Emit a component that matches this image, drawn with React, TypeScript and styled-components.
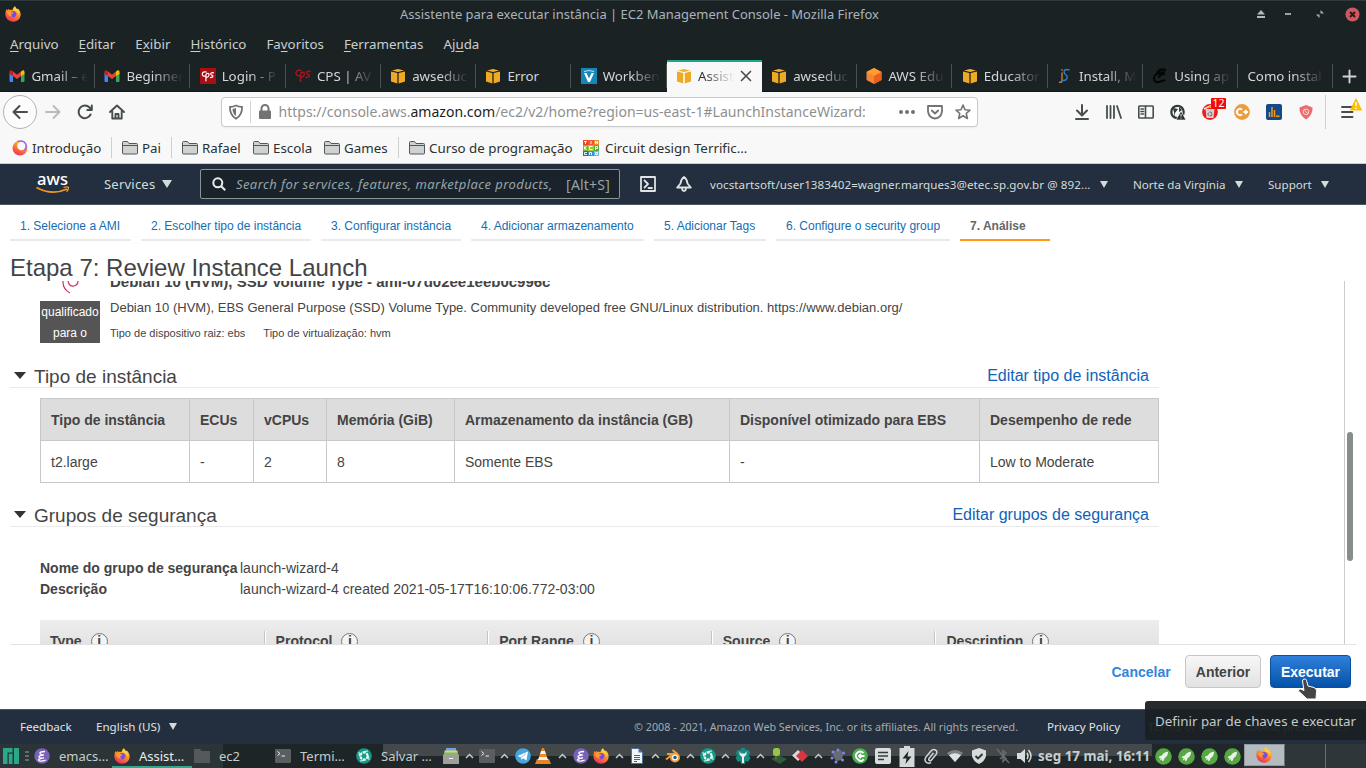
import React from "react";
import styled, { createGlobalStyle, css } from "styled-components";

const ui = '"Noto Sans", sans-serif';
const sans = '"Liberation Sans", Arial, sans-serif';

const Global = createGlobalStyle`
  * { box-sizing: border-box; }
  html, body { margin: 0; padding: 0; }
  body { width: 1366px; height: 768px; overflow: hidden; background: #fff; }
  svg { display: block; flex: none; }
`;

const Screen = styled.div`
  position: relative;
  width: 1366px;
  height: 768px;
  display: flex;
  flex-direction: column;
  overflow: hidden;
  font-family: ${ui};
  white-space: nowrap;
`;

/* ---------- window chrome ---------- */
const TitleBar = styled.header`
  height: 28px;
  flex: none;
  display: flex;
  align-items: center;
  background: #1b2224;
  border-top: 1px solid #2f3a3c;
  padding: 0 0 1px 5px;
`;
const WindowTitle = styled.div`
  font-size: 12.96px;
  line-height: 20px;
  color: #a9b4bd;
  margin-left: 379px;
  padding-bottom: 1px;
`;
const WindowButtons = styled.div`
  display: flex;
  align-items: center;
  margin-left: auto;
`;
const MenuBar = styled.nav`
  height: 32px;
  flex: none;
  display: flex;
  align-items: center;
  gap: 20px;
  padding-left: 10px;
  background: #1b2224;
  color: #c9cfcf;
  font-size: 13.33px;
  u { text-underline-offset: 2px; }
`;
const TabStrip = styled.div`
  height: 32px;
  flex: none;
  display: flex;
  align-items: center;
  background: #1b2224;
  box-shadow: inset 0 -1px 0 #101516;
`;
const Tab = styled.div<{ $active?: boolean; $first?: boolean }>`
  position: relative;
  width: ${(p) => (p.$first ? 95 : 95.25)}px;
  height: 32px;
  flex: none;
  display: flex;
  align-items: center;
  gap: 6px;
  padding-left: 9.4px;
  color: #d3d7d7;
  font-size: 13.33px;
  ${(p) =>
    p.$active
      ? css`
          background: #f8f8f8;
          color: #2f3536;
          box-shadow: inset 0 2px 0 #1fa68a;
        `
      : css`
          &::after {
            content: "";
            position: absolute;
            right: 0;
            top: 4px;
            width: 1px;
            height: 24px;
            background: #4a5152;
          }
        `}
`;
const TabLabel = styled.span<{ $w?: number; $fade?: boolean }>`
  width: ${(p) => p.$w ?? 55}px;
  flex: none;
  overflow: hidden;
  mask-image: ${(p) => (p.$fade === false ? "none" : "linear-gradient(90deg, #000 calc(100% - 30px), transparent)")};
`;
const NewTab = styled.div`
  margin-left: 8.5px;
`;
const NavBar = styled.div`
  position: relative;
  height: 40px;
  flex: none;
  display: flex;
  align-items: center;
  background: #f8f8f8;
`;
const BackButton = styled.div`
  width: 34px;
  height: 34px;
  margin-left: 3px;
  border: 1px solid #b4b4b4;
  border-radius: 50%;
  background: #fcfcfc;
  display: grid;
  place-items: center;
`;
const NavIcons = styled.div`
  display: flex;
  align-items: center;
  gap: 16px;
  margin-left: 8px;
  width: 176px;
`;
const UrlBox = styled.div`
  width: 757px;
  height: 30px;
  display: flex;
  align-items: center;
  background: #fff;
  border: 1px solid #c9c9c9;
  border-radius: 4px;
  padding: 0 6px 0 6px;
  box-shadow: 0 1px 2px rgba(0, 0, 0, 0.05);
`;
const UrlDivider = styled.i`
  width: 1px;
  height: 22px;
  background: #d4d4d4;
  margin: 0 7px 0 6px;
`;
const Url = styled.div`
  flex: 1;
  margin: -1px 0 0 6.5px;
  font-size: 14.03px;
  color: #8f8f8f;
  b { color: #1d1d1d; font-weight: 400; }
`;
const UrlActions = styled.div`
  display: flex;
  align-items: center;
  gap: 12px;
`;
const Extensions = styled.div`
  width: 347px;
  flex: none;
  display: flex;
  align-items: center;
  gap: 16px;
  padding-left: 96px;
`;
const Badge = styled.span`
  position: absolute;
  left: 1211px;
  top: 6px;
  width: 15px;
  height: 11px;
  border-radius: 1px;
  background: #f50a0a;
  color: #fff;
  font: 10.5px/11px ${ui};
  text-align: center;
`;
const WarnBadge = styled.div`
  position: absolute;
  left: 1350px;
  top: 6px;
`;
const MenuSlot = styled.div`
  border-left: 1px solid #cfcfcf;
  height: 34px;
  padding-left: 15px;
  display: flex;
  align-items: center;
`;
const Bookmarks = styled.div`
  height: 32px;
  flex: none;
  display: flex;
  align-items: center;
  background: #f8f8f8;
  border-bottom: 1px solid #c8ccd2;
  font-size: 13.33px;
  color: #2b3032;
  padding-left: 12px;
`;
const Bookmark = styled.div<{ $w: number; $gap?: number }>`
  width: ${(p) => p.$w}px;
  flex: none;
  display: flex;
  align-items: center;
  gap: ${(p) => p.$gap ?? 4}px;
`;
const BookmarkDivider = styled.i<{ $gap: number }>`
  width: 1px;
  height: 21px;
  background: #cfcfcf;
  margin-right: ${(p) => p.$gap}px;
`;

/* ---------- AWS console ---------- */
const AwsBar = styled.div`
  height: 41px;
  flex: none;
  display: flex;
  align-items: center;
  background: #232f3e;
  border-bottom: 1px solid #4b5561;
  color: #d5dbdb;
  font-size: 13px;
  padding-left: 36px;
`;
const Services = styled.div`
  width: 96px;
  margin-left: 34px;
  display: flex;
  align-items: center;
  gap: 7px;
  letter-spacing: 0.22px;
`;
const Search = styled.div`
  width: 420px;
  height: 30px;
  display: flex;
  align-items: center;
  background: #1a222c;
  border: 1px solid #879596;
  border-radius: 2px;
  padding: 0 9px 0 11px;
  color: #95a5a6;
`;
const SearchHint = styled.i`
  margin-left: 10px;
  letter-spacing: 0.4px;
`;
const Shortcut = styled.span`
  margin-left: auto;
  font-size: 14px;
  letter-spacing: 0.2px;
`;
const AwsTools = styled.div`
  display: flex;
  gap: 20px;
  margin-left: 20px;
`;
const AccountGroup = styled.div`
  display: flex;
  gap: 25px;
  margin-left: 18px;
`;
const Account = styled.div<{ $w: number; $track?: number }>`
  width: ${(p) => p.$w}px;
  flex: none;
  display: flex;
  align-items: center;
  justify-content: space-between;
  font-size: 11.6px;
  letter-spacing: ${(p) => p.$track ?? 0}px;
`;
const Caret = styled.i<{ $s?: number }>`
  width: 0;
  height: 0;
  border: ${(p) => p.$s ?? 5}px solid transparent;
  border-top: ${(p) => (p.$s ?? 5) * 1.6}px solid #d5dbdb;
  border-bottom: 0;
`;
const Page = styled.main`
  height: 504px;
  flex: none;
  background: #fff;
  font-family: ${sans};
  color: #444;
`;
const Steps = styled.div`
  height: 36px;
  display: flex;
  gap: 10px;
  padding-left: 10px;
`;
const Step = styled.div<{ $w: number; $active?: boolean }>`
  width: ${(p) => p.$w}px;
  height: 36px;
  padding: 12px 0 0 10px;
  font-size: 12px;
  line-height: 18px;
  color: ${(p) => (p.$active ? "#666" : "#146eb4")};
  font-weight: ${(p) => (p.$active ? 700 : 400)};
  border-bottom: 2px solid ${(p) => (p.$active ? "#ff9a12" : "#eaeaea")};
`;
const Heading = styled.h1`
  margin: 0;
  height: 40px;
  padding: 12px 0 0 10px;
  font-weight: 400;
  font-size: 24px;
  line-height: 30px;
`;
const ScrollArea = styled.section`
  height: 363px;
  width: 1346px;
  margin-left: 10px;
  display: flex;
  overflow: hidden;
`;
const Content = styled.div`
  width: 1149px;
  height: 363px;
`;
const Track = styled.div`
  margin-left: auto;
  width: 12px;
  height: 363px;
  border-left: 1px solid #ccc;
  padding: 151px 0 0 2px;
`;
const Thumb = styled.div`
  width: 6px;
  height: 129px;
  border-radius: 3px;
  background: #888c8d;
`;
const Ami = styled.div`
  display: flex;
  height: 80px;
  margin-left: 30px;
`;
const AmiBadgeColumn = styled.div`
  width: 60px;
`;
const FreeTier = styled.div`
  width: 60px;
  height: 42px;
  margin-top: 6px;
  padding-top: 1px;
  background: #555;
  color: #fff;
  font-size: 12px;
  line-height: 21px;
  text-align: center;
`;
const AmiText = styled.div`
  margin-left: 10px;
`;
const AmiTitle = styled.div`
  margin-top: -9px;
  height: 20px;
  font-size: 15px;
  font-weight: 700;
  line-height: 20px;
`;
const AmiDescription = styled.div`
  margin-top: 6px;
  font-size: 13px;
  line-height: 20px;
  letter-spacing: 0.005px;
`;
const AmiMeta = styled.div`
  display: flex;
  gap: 18px;
  margin-top: 6px;
  font-size: 11px;
  line-height: 18px;
`;
const SectionHead = styled.div`
  height: 27px;
  display: flex;
  align-items: center;
  border-bottom: 1px solid #eaeaea;
  font-size: 19px;
  padding: 6px 10px 0 3px;
`;
const Toggle = styled.i`
  border: 6.5px solid transparent;
  border-top: 7px solid #333;
  border-bottom: 0;
  margin: -3px 8.500px 0 0.5px;
`;
const EditLink = styled.a`
  margin: -2px 0 0 auto;
  font-size: 16px;
  color: #0f62b8;
`;
const Table = styled.table`
  width: 1118px;
  height: 85px;
  margin: 10px 0 17px 30px;
  border-collapse: collapse;
  table-layout: fixed;
  font-size: 14px;
  th, td {
    border: 1px solid #c8c8c8;
    padding: 0 0 0 10px;
    text-align: left;
    height: 42px;
  }
  th { background: #ddd; }
`;
const GroupInfo = styled.dl`
  margin: 31px 0 20px 30px;
  display: grid;
  grid-template-columns: 200px 1fr;
  font-size: 14px;
  line-height: 21px;
  dt { font-weight: 700; }
  dd { margin: 0; }
`;
const RuleHeader = styled.div`
  margin-left: 30px;
  height: 42px;
  display: flex;
  align-items: center;
  background: linear-gradient(#ededed, #dcdcdc);
  font-size: 14px;
  font-weight: 700;
`;
const RuleColumn = styled.div<{ $w: number }>`
  width: ${(p) => p.$w}px;
  height: 20px;
  display: flex;
  align-items: center;
  gap: 9px;
  padding-left: 10px;
  & + & { border-left: 1px solid #c4c4c4; box-shadow: inset 1px 0 0 #fff; padding-left: 11px; }
`;
const Info = styled.span`
  width: 17px;
  height: 17px;
  border: 1px solid #777;
  border-radius: 50%;
  background: #f4f4f4;
  font: 700 14px/15px ${sans};
  text-align: center;
`;
const Actions = styled.div`
  width: 1346px;
  height: 65px;
  margin-left: 10px;
  border-top: 1px solid #e2e2e2;
  display: flex;
  justify-content: flex-end;
  padding: 10px 5px 0 0;
  font-size: 14px;
  font-weight: 700;
`;
const Button = styled.button<{ $kind: "link" | "plain" | "primary"; $w: number }>`
  width: ${(p) => p.$w}px;
  height: 33px;
  padding: 0;
  border: 1px solid transparent;
  border-radius: 4px;
  font: 700 14px ${sans};
  ${(p) => p.$kind === "link" && css`background: none; color: #2f86dc; margin-right: 14.5px;`}
  ${(p) => p.$kind === "plain" && css`background: linear-gradient(#f7f7f7, #e2e2e2); color: #444; border-color: #c6c6c6; margin-right: 9px;`}
  ${(p) => p.$kind === "primary" && css`background: linear-gradient(#2f80dc, #0453a8); color: #fff; border-color: #0a4fa0;`}
`;
const Footer = styled.footer`
  height: 35px;
  flex: none;
  display: flex;
  align-items: center;
  background: #232f3e;
  border-top: 1px solid #4b5561;
  color: #e0e4e4;
  font-size: 11.6px;
  padding: 0 0 1px 20px;
`;
const FooterItem = styled.span<{ $w?: number; $dim?: boolean }>`
  width: ${(p) => (p.$w ? p.$w + "px" : "auto")};
  display: flex;
  align-items: center;
  gap: 9px;
  ${(p) => p.$dim && css`color: #a2abb1; font-size: 10.76px;`}
`;

/* ---------- desktop panel ---------- */
const Panel = styled.div`
  height: 24px;
  flex: none;
  display: flex;
  align-items: center;
  background: linear-gradient(#43494b 50%, #1f2729 50%);
  color: #c3cccc;
`;
const TaskList = styled.div`
  width: 442px;
  height: 24px;
  display: flex;
  align-items: center;
  background: linear-gradient(90deg, #2b3436 223px, #1e2527 223px, #1e2527 383px, transparent 383px);
  font-size: 13px;
`;
const Launcher = styled.div`
  width: 32px;
  display: flex;
  align-items: center;
  gap: 6px;
  padding-left: 3px;
`;
const Task = styled.div<{ $w: number; $active?: boolean }>`
  width: ${(p) => p.$w}px;
  height: 24px;
  flex: none;
  display: flex;
  align-items: center;
  gap: 9px;
  padding-left: 2px;
  ${(p) => p.$active && css`color: #e6ecec; box-shadow: inset 0 -2px 0 #2fa98c;`}
`;
const Slot = styled.div<{ $w: number }>`
  width: ${(p) => p.$w}px;
  flex: none;
  display: flex;
  justify-content: center;
`;
const Clock = styled.div`
  width: 115.5px;
  height: 24px;
  line-height: 24px;
  padding-left: 2px;
  font-size: 13.4px;
  font-weight: 700;
  flex: none;
  color: #c6cfcf;
`;
const StatusGroup = styled.div`
  height: 24px;
  display: flex;
  align-items: center;
  background: #1f2729;
`;
const Pager = styled.div`
  flex: 1;
  height: 24px;
  display: flex;
  background: #2e3639;
`;
const Workspace = styled.div<{ $active?: boolean }>`
  width: 41px;
  height: ${(p) => (p.$active ? 22 : 24)}px;
  display: grid;
  place-items: center;
  background: ${(p) => (p.$active ? "#b4bcc0" : "transparent")};
  border: ${(p) => (p.$active ? "1px solid #929a9d" : "0")};
  border-right: 1px solid #697073;
`;
const Tooltip = styled.div`
  position: absolute;
  left: 1145px;
  top: 701px;
  width: 221px;
  height: 39px;
  border-radius: 3px 0 0 3px;
  background: rgba(26, 32, 34, 0.95);
  color: #c3cbcb;
  font-size: 13.33px;
  line-height: 41px;
  padding-left: 10px;
`;
const Pointer = styled.div`
  position: absolute;
  left: 1296px;
  top: 678px;
`;

/* ---------- drawings ---------- */
const Firefox = ({ s = 16 }: { s?: number }) => (
  <svg width={s} height={s} viewBox="0 0 16 16">
    <defs>
      <linearGradient id="ffx" x1=".8" y1="0" x2=".3" y2="1">
        <stop offset="0" stopColor="#ffe44a" />
        <stop offset=".45" stopColor="#ff9124" />
        <stop offset="1" stopColor="#ee2b61" />
      </linearGradient>
    </defs>
    <path fill="url(#ffx)" d="M1.6 3 2.6 4.2 4 2.8 4.4 4.1Q6 3.6 7.4 4.1 8 1.6 10 .3 10.3 2 12 3.2L12.8 2.4Q16 5.6 15.6 9.2C15 13.4 11.800 15.700 8 15.700 3.600 15.700.400 12.300.400 8.100.400 6 .9 4.400 1.600 3Z" />
    <path fill="#7a4be0" d="M5.300 7.200Q5.800 5 8.200 5 11.500 5.200 11.500 8.300 11 11.400 8 11.400 5.500 11.200 4.800 9Z" />
    <path fill="#ff9d2a" d="M1.800 6.200Q4.200 4.600 6.500 6.300L8.600 6.500Q8 8 6.200 8.200 6 9.600 7.600 10.200 5 11 3 8.800Z" />
    <path fill="#ffd23c" d="M10 .3Q10.300 2 12 3.200 14.500 5.500 13.700 9 12.900 4.800 9.800 4.700 8.500 4 8.800 2Z" />
  </svg>
);
const Gmail = () => (
  <svg width="16" height="16" viewBox="0 0 16 16">
    <path fill="#4285f4" d="M.5 4.500 4 7v7H1.500Q.5 14 .5 13z" />
    <path fill="#34a853" d="M15.500 4.500 12 7v7h2.500q1 0 1-1z" />
    <path fill="#ea4335" d="M4 3.600 8 6.700l4-3.100V8l-4 3-4-3z" />
    <path fill="#c5221f" d="M.5 6V4C.5 2.200 2.300 1.800 3.300 2.900L4 3.600V8z" />
    <path fill="#fbbc04" d="M15.500 6V4c0-1.800-1.800-2.200-2.800-1.100L12 3.600V8z" />
  </svg>
);
const Cps = ({ bg }: { bg?: boolean }) => (
  <svg width="16" height="16" viewBox="0 0 16 16">
    {bg && <path fill="#a80f12" d="M0 0h16v16H0z" />}
    <g fill="none" stroke={bg ? "#fff" : "#a5141b"} strokeWidth="1.500" transform={bg ? "translate(1.500 2) scale(.8)" : undefined}>
      <path d="M6.500 2.500Q1 1.500 1 5T5.500 7.500M5.500 14V6.500Q6 3.500 9 4.500 10.500 8 6 9.500M15.500 3.500Q11.500 2.500 11.500 5 12 6 14 7 15.500 9.500 10.500 9.500" />
    </g>
  </svg>
);
const Cube = ({ light, orange }: { light?: boolean; orange?: boolean }) =>
  orange ? (
    <svg width="16" height="16" viewBox="0 0 16 16">
      <path fill="#f58536" d="M8 0l7.500 4v8L8 16 .5 12V4z" />
      <path fill="#ff9d2d" d="M8 0l7.500 4L8 8 .5 4z" />
      <path fill="#e9601a" d="M8 8l7.500-4v8L8 16z" />
    </svg>
  ) : (
    <svg width="16" height="16" viewBox="0 0 16 16">
      <path fill="#efaa25" d="M1 3.600 7.300 5v10.600L1 13.500zM15 3.600 8.700 5v10.600l6.300-2.100z" />
      <path fill="#f3b02c" d="M2 2.500 8 1l6 1.500L8 4z" />
      <path fill={light ? "#fff4d5" : "#7d5a12"} d="M7.400 5.500h1.200V15H7.400z" />
    </svg>
  );
const Workbench = () => (
  <svg width="16" height="16" viewBox="0 0 16 16">
    <path fill="#1686b8" d="M0 0h16v16H0z" />
    <path fill="#fff" d="M3 5h2.500L8 10.500 10.500 5H13L9 14H7z" />
    <path stroke="#bde2f1" d="M3 3.500Q8 1.500 13 3.500" fill="none" />
  </svg>
);
const Js = () => (
  <svg width="16" height="16" viewBox="0 0 16 16" fill="none" strokeWidth="1.500">
    <path stroke="#c97a22" d="M5 4.500v8.500q-.5 2-3 1M4.200 2h1.600" />
    <path stroke="#2d7fd2" d="M12.500 2Q7.500.5 7 4q0 2 3 4 1 5-5 4.500" />
  </svg>
);
const Scribble = () => (
  <svg width="16" height="16" viewBox="0 0 16 16" fill="none" stroke="#040606" strokeWidth="2.200">
    <path d="M14 2Q8 0 5 5M13 4Q2 5 2 10t5 4l6-2M13 6Q7 6 7 10" />
  </svg>
);
const Stroke = ({ d, s = 16, c = "#474d4f", w = 1.8 }: { d: string; s?: number; c?: string; w?: number }) => (
  <svg width={s} height={s} viewBox="0 0 16 16" fill="none" stroke={c} strokeWidth={w} strokeLinecap="round" strokeLinejoin="round">
    <path d={d} />
  </svg>
);
const Folder = () => (
  <svg width="16" height="16" viewBox="0 0 16 16">
    <path fill="#d0d1d1" stroke="#51585a" d="M.5 2.500q0-1 1-1h4l1.500 2h7.500q1 0 1 1v8.500q0 1-1 1h-13q-1 0-1-1z" />
    <path stroke="#51585a" d="M1 5.500h14" />
  </svg>
);
const Emacs = () => (
  <svg width="16" height="16" viewBox="0 0 16 16">
    <circle cx="8" cy="8" r="7.700" fill="#7a62b8" />
    <path fill="none" stroke="#fff" strokeWidth="1.300" d="M11 3.500Q5 3.800 6 5.500t4 1.300Q4.500 7.500 5 9t5 .8Q3 11 4.800 12.500t7-.5" />
  </svg>
);
const Terminal = () => (
  <svg width="16" height="16" viewBox="0 0 16 16">
    <rect y="1" width="16" height="14" rx="1" fill="#5a5e60" />
    <path fill="none" stroke="#e9ecec" d="M2.500 3.500 5 5.500 2.500 7.500M6.500 8h3.500" />
  </svg>
);
const Swirl = () => (
  <svg width="16" height="16" viewBox="0 0 16 16">
    <circle cx="8" cy="8" r="7.800" fill="#159a86" />
    <circle cx="8" cy="8" r="3.600" fill="none" stroke="#e8f7f4" strokeWidth="2.200" strokeDasharray="3 .8" />
    <path stroke="#e8f7f4" d="M8 3.500 12 3M12.500 8l.5 4M8 12.500 4 13M3.500 8 3 4" />
  </svg>
);
const Rocket = () => (
  <svg width="17" height="17" viewBox="0 0 16 16">
    <circle cx="8" cy="8" r="7.800" fill="#57a845" />
    <path fill="#e9f2e7" d="M12.300 3.500Q8.500 3.500 6.500 7L4.300 7.800 3.500 9.500l2 .2L4 12l2.600-1.300.2 1.800 1.500-.8.8-2.200Q12.300 7.500 12.300 3.500Z" />
  </svg>
);

const tray: [number, string][] = [
  [18, "drawer"], [18, "up"], [17, "term"], [18, "up"], [20, "telegram"], [20.5, "vlc"], [17.5, "up"], [20.5, "emacs"], [19.5, "firefox"], [17.5, "up"],
  [17.5, "doc"], [18, "up"], [17, "blender"], [18, "up"], [17, "swirl"], [18, "up"], [17, "tools"], [18, "up"], [20, "tree"], [21, "diamond"], [17, "up"],
  [21.5, "chip"], [23, "green"], [23.5, "notes"], [24, "battery"], [24, "clip"], [24, "wifi"], [24, "shield"], [23, "bluetooth"], [22, "sound"],
];

const TrayIcon = ({ k }: { k: string }) => {
  const box = { width: 16, height: 16, viewBox: "0 0 16 16" };
  switch (k) {
    case "up": return <svg width="9" height="6" viewBox="0 0 9 6"><path d="M1 5l3.500-3.500L8 5" fill="none" stroke="#c3cccc" strokeWidth="1.500" /></svg>;
    case "term": return <Terminal />;
    case "emacs": return <Emacs />;
    case "firefox": return <Firefox />;
    case "swirl": return <Swirl />;
    case "drawer": return <svg {...box}><path fill="#6ba5e7" d="M3 0h10v3H3z" /><path fill="#f3cf5a" d="M1.500 2.500h13V5h-13z" /><path fill="#6dc07a" d="M1 4.500h14V7H1z" /><path fill="#a09f98" d="M0 6.500h16V16H0z" /><path stroke="#fff" d="M6 10.500h4" /></svg>;
    case "telegram": return <svg {...box}><circle cx="8" cy="8" r="7.800" fill="#45a5dd" /><path fill="#fff" d="M2.500 8 13 3.500 11.500 12.500 8 10.300 6.500 12 6 9.500z" /><path stroke="#9bc9e6" d="M6 9.500 11 5.500" /></svg>;
    case "vlc": return <svg {...box}><path fill="#e88520" d="M2 11h12l2 5H0zM7 0h2l1 3H6z" /><path fill="#f5f3ee" d="M6 3h4l1 3H5z" /><path fill="#f28c22" d="M5 6h6l1 3H4z" /><path fill="#f5f3ee" d="M4 9h8l1 3H3z" /></svg>;
    case "doc": return <svg {...box}><path fill="#f2f5f8" stroke="#4e6ea0" d="M2.500.5h7l4 4v11h-11z" /><path fill="#4e6ea0" d="M9.500.5v4h4z" /><path stroke="#42619a" d="M5 7.500h6M5 9.500h6M5 11.500h6M5 13.500h3" /></svg>;
    case "blender": return <svg {...box}><path fill="none" stroke="#ef9d38" strokeWidth="2" d="M1 11.500 8 6M2 6h8M7.500 2l5 4" /><circle cx="10" cy="9.500" r="4" fill="#fff" stroke="#ef9d38" strokeWidth="2" /><circle cx="10" cy="9.500" r="1.800" fill="#2b5a8f" /></svg>;
    case "tools": return <svg {...box}><path fill="#168b82" d="M6 0h4l.5 2.500L13 1.500l2.500 3.500-2 2 2 3-2.500 4-2.500-1L10 16H6l-.5-3L3 14 .5 10l2-3-2-2L3 1.500l2.500 1z" /><path fill="#e7f0ef" d="M4.500 3v3.500L7 9v6h2V9l2.500-2.500V3L10 5.500H6z" /></svg>;
    case "tree": return <svg {...box}><path fill="#2b5d38" d="M0 11 7 7l9 4-7 5z" /><path stroke="#7b5a32" strokeWidth="2" d="M5 7v4.500" /><rect x="2" y="0" width="7" height="8" rx="2.500" fill="#93c746" /></svg>;
    case "diamond": return <svg {...box}><path fill="#ded7d7" d="M0 7.500 6 2l6 5.500L6 13z" /><path fill="#d73743" d="M4 8l6-6 6 6-6 6z" /></svg>;
    case "chip": return <svg {...box}><path fill="#686c72" d="M4 3l7-1 2 5-1 5-6 1-3-5z" /><g fill="#8585ef"><circle cx="3" cy="4" r="1.500" /><circle cx="8" cy="2" r="1.500" /><circle cx="13.500" cy="5" r="1.500" /><circle cx="2" cy="10" r="1.500" /><circle cx="6" cy="14" r="1.500" /><circle cx="12.500" cy="12" r="1.500" /></g></svg>;
    case "green": return <svg {...box}><circle cx="8" cy="8" r="7.800" fill="#4caf50" /><path fill="none" stroke="#fff" strokeWidth="1.800" d="M11.500 5Q8 2 5 5T6 11.500 11.500 11M12.500 8H7.500M9 6 7 8l2 2" /></svg>;
    case "notes": return <svg {...box}><rect width="16" height="16" rx="2" fill="#d9dddd" /><path stroke="#353c3e" strokeWidth="1.600" d="M3 4.500h10M3 8h10M3 11.500h6" /></svg>;
    case "battery": return <svg width="16" height="21" viewBox="0 0 16 21"><path fill="#d3d8d8" d="M5 0h6v2h4.500v19H.5V2H5z" /><path fill="#1f2729" d="M9.500 5 3.500 12.500h4L6.500 18l6-7.500h-4z" /></svg>;
    case "clip": return <svg {...box}><path fill="none" stroke="#cfd5d5" strokeWidth="1.500" d="M10.500 5 6 10.500q-.8 1.500.5 2t2-.5L13 6.500q2-3-.5-4.500T8 3L3 9q-2 3 0 5t5 .5" /></svg>;
    case "wifi": return <svg {...box}><path fill="#7d8485" d="M0 5Q8-1 16 5L8 14z" /><path fill="#dfe3e3" d="M2 7.200Q8 3.500 14 7.200L8 14z" /></svg>;
    case "shield": return <svg {...box}><path fill="#d6dbdb" d="M8 0l7 2.500V8q-1 5-7 8Q2 13 1 8V2.500z" /><path fill="none" stroke="#2a3234" strokeWidth="1.800" d="M4.500 8l2.500 2.500L11.500 6" /></svg>;
    case "bluetooth": return <svg {...box} fill="none" stroke="#666d6f" strokeWidth="1.500"><path d="M5 4.500l6 6-3 3v-11l3 2.500-6 6M2 1l12 14" /></svg>;
    default: return <svg {...box}><path fill="#d6dbdb" d="M0 5h3.500L8 1v14l-4.500-4H0z" /><path fill="none" stroke="#d6dbdb" strokeWidth="1.500" d="M10 5q2 3 0 6M11.500 2q5 6 0 12" /></svg>;
  }
};

const tabs: { icon?: React.ReactNode; label: string; active?: boolean; fade?: boolean }[] = [
  { icon: <Gmail />, label: "Gmail – e" },
  { icon: <Gmail />, label: "Beginner" },
  { icon: <Cps bg />, label: "Login - P" },
  { icon: <Cps />, label: "CPS | AV" },
  { icon: <Cube />, label: "awseduc" },
  { icon: <Cube />, label: "Error", fade: false },
  { icon: <Workbench />, label: "Workben" },
  { icon: <Cube light />, label: "Assist", active: true },
  { icon: <Cube />, label: "awseduc" },
  { icon: <Cube orange />, label: "AWS Edu" },
  { icon: <Cube />, label: "Educator" },
  { icon: <Js />, label: "Install, M" },
  { icon: <Scribble />, label: "Using ap" },
  { label: "Como instal" },
];
const steps: [string, number][] = [
  ["1. Selecione a AMI", 121],
  ["2. Escolher tipo de instância", 170],
  ["3. Configurar instância", 140],
  ["4. Adicionar armazenamento", 173],
  ["5. Adicionar Tags", 112],
  ["6. Configure o security group", 174],
  ["7. Análise", 90],
];
const columns: [string, string, number][] = [
  ["Tipo de instância", "t2.large", 149],
  ["ECUs", "-", 64],
  ["vCPUs", "2", 73],
  ["Memória (GiB)", "8", 128],
  ["Armazenamento da instância (GB)", "Somente EBS", 275],
  ["Disponível otimizado para EBS", "-", 250],
  ["Desempenho de rede", "Low to Moderate", 179],
];

export default function App() {
  return (
    <>
      <Global />
      <Screen>
        <TitleBar>
          <Firefox />
          <WindowTitle>Assistente para executar instância | EC2 Management Console - Mozilla Firefox</WindowTitle>
          <WindowButtons>
            <Slot $w={27}><svg width="10" height="8" viewBox="0 0 10 8" fill="#b3bcbc"><path d="M5 0l4 4.500H1zM1 6h8v2H1z" /></svg></Slot>
            <Slot $w={27}><svg width="8" height="8" viewBox="0 0 8 8" fill="#9aa3a3"><path d="M1 3h6v2H1z" /></svg></Slot>
            <Slot $w={37}><svg width="10" height="10" viewBox="0 0 10 10" fill="#aab3b3"><path d="M5.500 1v3.500H9zM1 5.500h3.500V9z" /></svg></Slot>
            <Slot $w={28}><svg width="15" height="15" viewBox="0 0 15 15"><circle cx="7.500" cy="7.500" r="7" fill="#cf5860" /><path d="M5 5l5 5M10 5l-5 5" stroke="#251e20" strokeWidth="2" /></svg></Slot>
          </WindowButtons>
        </TitleBar>
        <MenuBar>
          <span><u>A</u>rquivo</span>
          <span><u>E</u>ditar</span>
          <span>E<u>x</u>ibir</span>
          <span><u>H</u>istórico</span>
          <span>Fa<u>v</u>oritos</span>
          <span><u>F</u>erramentas</span>
          <span>Aj<u>u</u>da</span>
        </MenuBar>
        <TabStrip>
          {tabs.map((t, i) => (
            <Tab key={i} $active={t.active} $first={i === 0}>
              {t.icon}
              <TabLabel $w={t.active ? 36 : t.icon ? 57 : 77} $fade={t.fade}>{t.label}</TabLabel>
              {t.active && <Stroke s={12} d="M2 2l12 12M14 2l-12 12" w={2.200} />}
            </Tab>
          ))}
          <NewTab><Stroke s={15} d="M8 1.500v13M1.500 8h13" c="#cfd5d5" w={2} /></NewTab>
        </TabStrip>
        <NavBar>
          <BackButton><Stroke d="M15 8H1.500M7.500 2 1.500 8l6 6" w={2} /></BackButton>
          <NavIcons>
            <Stroke d="M1 8h13.500M8.500 2l6 6-6 6" c="#b8bbbc" />
            <Stroke d="M13.600 10.500A6.300 6.300 0 1 1 12.500 3.500L14.500 5.500M14.800 1.500v4.500h-4.500" w={2} />
            <Stroke d="M1 8l7-6.500L15 8M3.300 7.500v7h9.400v-7M6.500 14v-4h3v4" w={1.900} />
          </NavIcons>
          <UrlBox>
            <svg width="16" height="16" viewBox="0 0 16 16"><path d="M8 1.500Q11 3 14 2.800 14.500 11 8 14.700 1.500 11 2 2.800 5 3 8 1.500Z" fill="none" stroke="#6f7374" strokeWidth="1.700" /><path fill="#6f7374" d="M8 4v8Q4.500 9.500 4.500 5Z" /></svg>
            <UrlDivider />
            <svg width="14" height="16" viewBox="0 0 14 16"><rect x="1" y="6.500" width="12" height="8.500" rx="1" fill="#737373" /><path d="M3.500 7V4.500a3.500 3.500 0 0 1 7 0V7" fill="none" stroke="#737373" strokeWidth="2" /></svg>
            <Url>https://console.aws.<b>amazon.com</b>/ec2/v2/home?region=us-east-1#LaunchInstanceWizard:</Url>
            <UrlActions>
              <svg width="16" height="16" viewBox="0 0 16 16" fill="#737373"><circle cx="2" cy="8" r="2" /><circle cx="8" cy="8" r="2" /><circle cx="14" cy="8" r="2" /></svg>
              <Stroke d="M1 2h14v5.500Q14 14 8 14.500 2 14 1 7.500ZM4.800 6.500 8 9.500l3.200-3" c="#737373" />
              <Stroke d="M8 1l2 4.700 5 .5-3.800 3.300 1.200 5L8 11.800l-4.400 2.700 1.200-5L1 6.200l5-.5z" c="#737373" w={1.600} />
            </UrlActions>
          </UrlBox>
          <Extensions>
            <Stroke d="M8 1v10M3 6.500l5 5 5-5M2 15h12" w={2} />
            <Stroke d="M1 2v12M4.500 2v12M8 2v12M11 2l4 12" w={1.800} />
            <Stroke d="M1.500 2h13q.7 0 .7.700v10.600q0 .7-.7.700h-13q-.7 0-.7-.700V2.700q0-.7.700-.700ZM7.500 2v12M3 5h2.500M3 7.500h2.500M3 10h2.500" w={1.600} />
            <svg width="16" height="16" viewBox="0 0 16 16"><circle cx="7.500" cy="8" r="6.200" fill="none" stroke="#33393b" strokeWidth="2.200" /><path d="M3 4l5 1-3 4v4zM9 3l3 3-3 2z" fill="#33393b" /><path d="M11 7l5 9H6z" fill="#252b2d" stroke="#f8f8f8" strokeWidth=".7" /><path d="M11 10v2.500M11 13.500v1" stroke="#fff" /></svg>
            <svg width="16" height="16" viewBox="0 0 16 16"><circle cx="8" cy="8" r="7.900" fill="#ee1c1c" /><path d="M3.500 5h9l-1 9h-7z" fill="#d9cfcf" /><path d="M2 5l7-3.500" stroke="#f2dddd" strokeWidth="1.500" /><path d="M7 2l4 2" stroke="#f0b52a" strokeWidth="2" /><circle cx="8" cy="10" r="2" fill="none" stroke="#655" strokeDasharray="3 1" /></svg>
            <svg width="16" height="16" viewBox="0 0 16 16"><circle cx="8" cy="8" r="7.900" fill="#ec9c3c" /><path d="M8 5.800a3 3 0 1 0 0 4.400M9.500 8h4.500M11.700 5.800v4.500" fill="none" stroke="#fff" strokeWidth="1.900" /></svg>
            <svg width="16" height="16" viewBox="0 0 16 16"><rect width="16" height="16" rx="2" fill="#134a87" /><path d="M3.500 8v5M6 3v10M8.500 6v7M10 12.300h3.500" stroke="#f39a1e" strokeWidth="1.500" /></svg>
            <svg width="16" height="16" viewBox="0 0 16 16"><path d="M8 1l6.500 2.500Q15 11 8 15.500 1 11 1.500 3.500Z" fill="#ee6a6d" /><circle cx="8" cy="7.800" r="2.800" fill="none" stroke="#fbd7d7" /><path d="M6.500 6l3 3.500" stroke="#fbd7d7" /></svg>
          </Extensions>
          <Badge>12</Badge>
          <MenuSlot>
            <Stroke d="M1 3h10.500M1 8h10.500M1 13h10.500" w={1.900} />
          </MenuSlot>
          <WarnBadge>
            <svg width="12" height="13" viewBox="0 0 12 13"><path d="M6 .8 11.500 12H.5z" fill="#ffbf00" stroke="#ffbf00" strokeLinejoin="round" /><path d="M6 4v4M6 9.500V11" stroke="#fff" strokeWidth="1.500" /></svg>
          </WarnBadge>
        </NavBar>
        <Bookmarks>
          <Bookmark $w={99}>
            <svg width="16" height="16" viewBox="0 0 16 16"><circle cx="8" cy="8" r="7.500" fill="url(#ffx)" /><circle cx="9.500" cy="6" r="4.300" fill="#f8f8f8" /><path d="M5.500 1.500Q12-.5 14 4.500 14.800 8.500 12 10.500" fill="none" stroke="#9a66f0" strokeWidth="1.500" /></svg>
            Introdução
          </Bookmark>
          <BookmarkDivider $gap={10} />
          <Bookmark $w={49}><Folder />Pai</Bookmark>
          <BookmarkDivider $gap={10} />
          <Bookmark $w={71}><Folder />Rafael</Bookmark>
          <Bookmark $w={71}><Folder />Escola</Bookmark>
          <Bookmark $w={74}><Folder />Games</Bookmark>
          <BookmarkDivider $gap={10} />
          <Bookmark $w={174}><Folder />Curso de programação</Bookmark>
          <Bookmark $w={200} $gap={6}>
            <svg width="16" height="16" viewBox="0 0 16 16">
              <path fill="#e8452c" d="M0 0h5v5H0z" /><path fill="#f0582c" d="M5 0h6v5H5z" /><path fill="#f58a2a" d="M11 0h5v5h-5z" />
              <path fill="#7cb829" d="M0 5h5v6H0z" /><path fill="#a4c62c" d="M5 5h6v6H5z" /><path fill="#4faf3c" d="M11 5h5v6h-5z" />
              <path fill="#1a6fb5" d="M0 11h5v5H0z" /><path fill="#3394d2" d="M5 11h6v5H5z" /><path fill="#6bb9e4" d="M11 11h5v5h-5z" />
              <path stroke="#fff" d="M1 1.500h3M2.500 1v3M8 1v3M12.500 4V1l2 3V1M1.500 6.500v3M3.500 6l-1.500 2 1.500 2M6.500 6.500h3M6.500 6v3.500h3M12.500 10V6.500h2v2h-2M4 12.500H1.500v2H4M6.500 15v-2.500h2V15M12.500 12.500h2v2h-2z" fill="none" strokeWidth=".9" />
            </svg>
            Circuit design Terrific…
          </Bookmark>
        </Bookmarks>

        <AwsBar>
          <svg width="34" height="22" viewBox="0 0 34 22">
            <text x="1" y="12" fontFamily="Noto Sans" fontSize="15.500" fontWeight="500" fill="#fff" textLength="31" lengthAdjust="spacingAndGlyphs">aws</text>
            <path d="M.5 14.500Q16 23 31 16" fill="none" stroke="#f7981d" strokeWidth="1.900" />
            <path d="M27.500 14.300q4-1 5 0 .3 2-2 4.500" fill="none" stroke="#f7981d" strokeWidth="1.300" />
          </svg>
          <Services>Services <Caret /></Services>
          <Search>
            <svg width="14" height="14" viewBox="0 0 14 14" fill="none" stroke="#eaeded" strokeWidth="2"><circle cx="5.800" cy="5.800" r="4.500" /><path d="M9 9l4.200 4.200" /></svg>
            <SearchHint>Search for services, features, marketplace products,</SearchHint>
            <Shortcut>[Alt+S]</Shortcut>
          </Search>
          <AwsTools>
            <Stroke d="M1 1h14v14h-14ZM4.500 4.500 8 8l-3.500 3.500M8.500 12h3.500" c="#dfe3e3" w={1.800} />
            <Stroke d="M8 1Q5 3 4.500 7.500L1.200 11.500h13.600L11.500 7.500Q11 3 8 1ZM6 12.500q.3 2.500 2 2.500t2-2.500" c="#dfe3e3" w={1.800} />
          </AwsTools>
          <AccountGroup>
            <Account $w={398} $track={0.08}>vocstartsoft/user1383402=wagner.marques3@etec.sp.gov.br @ 892... <Caret $s={4.5} /></Account>
            <Account $w={110}>Norte da Virgínia <Caret $s={4.5} /></Account>
            <Account $w={61}>Support <Caret $s={4.5} /></Account>
          </AccountGroup>
        </AwsBar>

        <Page>
          <Steps>
            {steps.map(([label, w], i) => (
              <Step key={label} $w={w} $active={i === 6}>{label}</Step>
            ))}
          </Steps>
          <Heading>Etapa 7: Review Instance Launch</Heading>
          <ScrollArea>
            <Content>
              <Ami>
                <AmiBadgeColumn>
                  <svg width="60" height="14" viewBox="0 0 60 14" fill="none" stroke="#d1306a" strokeWidth="1.200"><path d="M23 0q-.5 8 7 12M28 0q1.500 6 6 5 4-1 4-5" /></svg>
                  <FreeTier>qualificado<br />para o</FreeTier>
                </AmiBadgeColumn>
                <AmiText>
                  <AmiTitle>Debian 10 (HVM), SSD Volume Type - ami-07d02ee1eeb0c996c</AmiTitle>
                  <AmiDescription>Debian 10 (HVM), EBS General Purpose (SSD) Volume Type. Community developed free GNU/Linux distribution. https://www.debian.org/</AmiDescription>
                  <AmiMeta><span>Tipo de dispositivo raiz: ebs</span><span>Tipo de virtualização: hvm</span></AmiMeta>
                </AmiText>
              </Ami>
              <SectionHead><Toggle />Tipo de instância<EditLink>Editar tipo de instância</EditLink></SectionHead>
              <Table>
                <colgroup>{columns.map(([h, , w]) => <col key={h} width={w} />)}</colgroup>
                <thead><tr>{columns.map(([h]) => <th key={h}>{h}</th>)}</tr></thead>
                <tbody><tr>{columns.map(([h, v]) => <td key={h}>{v}</td>)}</tr></tbody>
              </Table>
              <SectionHead><Toggle />Grupos de segurança<EditLink>Editar grupos de segurança</EditLink></SectionHead>
              <GroupInfo>
                <dt>Nome do grupo de segurança</dt><dd>launch-wizard-4</dd>
                <dt>Descrição</dt><dd>launch-wizard-4 created 2021-05-17T16:10:06.772-03:00</dd>
              </GroupInfo>
              <RuleHeader>
                {["Type", "Protocol", "Port Range", "Source", "Description"].map((c) => (
                  <RuleColumn key={c} $w={223.6}>{c}<Info>i</Info></RuleColumn>
                ))}
              </RuleHeader>
            </Content>
            <Track><Thumb /></Track>
          </ScrollArea>
          <Actions>
            <Button $kind="link" $w={60}>Cancelar</Button>
            <Button $kind="plain" $w={76}>Anterior</Button>
            <Button $kind="primary" $w={81}>Executar</Button>
          </Actions>
        </Page>

        <Footer>
          <FooterItem $w={76}>Feedback</FooterItem>
          <FooterItem $w={538}>English (US) <Caret $s={4.5} /></FooterItem>
          <FooterItem $w={413} $dim>© 2008 - 2021, Amazon Web Services, Inc. or its affiliates. All rights reserved.</FooterItem>
          <FooterItem $w={101}>Privacy Policy</FooterItem>
          <FooterItem $w={95}>Terms of Use</FooterItem>
          <FooterItem>Cookie preferences</FooterItem>
        </Footer>

        <Panel>
          <TaskList>
            <Launcher>
              <svg width="16" height="16" viewBox="0 0 16 16"><path fill="#2aa88a" d="M0 0h9.500v4.500h-5V16H0zM5.800 5.800h3.700V16H5.800zM11 0h5v16h-5z" /></svg>
              <svg width="4" height="10" viewBox="0 0 4 10"><path d="M0 1h4M0 5h4M0 9h4" stroke="#9da5a6" /></svg>
            </Launcher>
            <Task $w={80}><Emacs />emacs…</Task>
            <Task $w={80} $active><Firefox />Assist…</Task>
            <Task $w={81}><svg width="16" height="14" viewBox="0 0 16 14"><path fill="#54595b" d="M0 0h6l1.500 2H16v12H0z" /></svg>ec2</Task>
            <Task $w={81}><Terminal />Termi…</Task>
            <Task $w={88}><Swirl />Salvar …</Task>
          </TaskList>
          {tray.map(([w, k], i) => <Slot key={i} $w={w}><TrayIcon k={k} /></Slot>)}
          <Clock>seg 17 mai, 16:11</Clock>
          <StatusGroup>
            {[0, 1, 2, 3].map((i) => <Slot key={i} $w={23}><Rocket /></Slot>)}
          </StatusGroup>
          <Pager>
            <Workspace $active><Firefox /></Workspace>
            <Workspace />
          </Pager>
        </Panel>

        <Tooltip>Definir par de chaves e executar</Tooltip>
        <Pointer>
          <svg width="22" height="22" viewBox="0 0 22 22"><path d="M8 1q2-.5 2.500 1.500L12 8l6 1.500q3 1 2.500 4L20 21h-9L2.500 13q-.5-2 2-2L8 12.500 6.500 3Q6.500 1.500 8 1Z" fill="#444" stroke="#fff" /></svg>
        </Pointer>
      </Screen>
    </>
  );
}
